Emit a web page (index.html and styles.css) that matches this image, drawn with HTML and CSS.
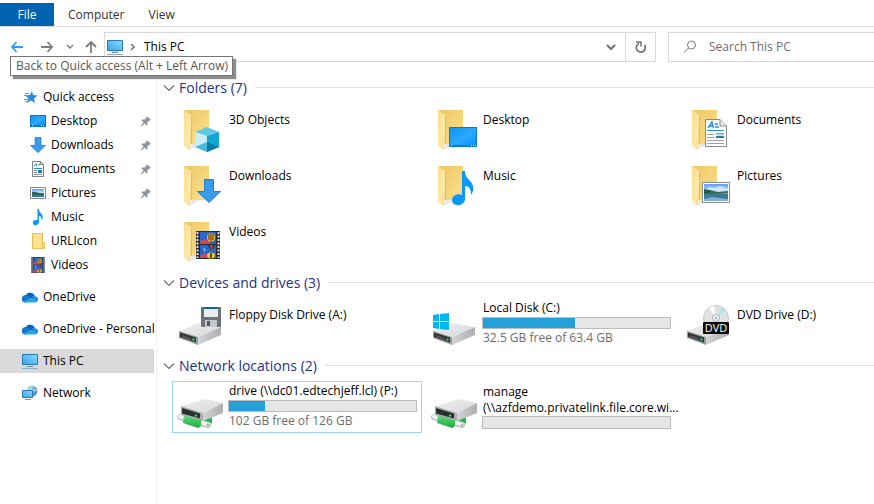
FILE: index.html
```html
<!DOCTYPE html>
<html lang="en">
<head>
<meta charset="utf-8">
<title>This PC</title>
<link rel="stylesheet" href="styles.css">
</head>
<body>
<svg class="defs" aria-hidden="true">
  <defs>
    <linearGradient id="gFlap" x1="0" y1="0" x2="1" y2="1"><stop offset="0" stop-color="#fbdc88"/><stop offset=".6" stop-color="#ffe9a8"/><stop offset="1" stop-color="#f6d47a"/></linearGradient>
    <linearGradient id="gBody" x1="0" y1="0" x2="1" y2="1"><stop offset="0" stop-color="#ecc866"/><stop offset="1" stop-color="#fde08c"/></linearGradient>
    <linearGradient id="gScreen" x1="0" y1="0" x2="1" y2="1"><stop offset="0" stop-color="#0f95f5"/><stop offset=".55" stop-color="#2aa9ff"/><stop offset="1" stop-color="#0a93fa"/></linearGradient>
    <linearGradient id="gMonitor" x1="0" y1="1" x2="1" y2="0"><stop offset="0" stop-color="#38a6ec"/><stop offset="1" stop-color="#8bd6ff"/></linearGradient>
    <linearGradient id="gTop" x1="0" y1="0" x2="1" y2="1"><stop offset="0" stop-color="#f0f0f1"/><stop offset="1" stop-color="#d6d7d9"/></linearGradient>
    <linearGradient id="gSide" x1="0" y1="0" x2="1" y2="0"><stop offset="0" stop-color="#d3d4d5"/><stop offset="1" stop-color="#adaeb1"/></linearGradient>
    <linearGradient id="gSky" x1="0" y1="0" x2="0" y2="1"><stop offset="0" stop-color="#5d9df5"/><stop offset=".5" stop-color="#d6ecfb"/><stop offset=".6" stop-color="#3d7f8c"/><stop offset="1" stop-color="#2b6fb8"/></linearGradient>
    <linearGradient id="gGreen" x1="0" y1="0" x2="0" y2="1"><stop offset="0" stop-color="#5be07a"/><stop offset="1" stop-color="#1fa83f"/></linearGradient>
    <linearGradient id="gGlobe" x1="0" y1="0" x2="1" y2="1"><stop offset="0" stop-color="#bfe3f5"/><stop offset="1" stop-color="#3379a8"/></linearGradient>
  </defs>

  <symbol id="folder" viewBox="0 0 48 48">
    <path d="M13 45l3-6h8z" fill="#e6e6e6"/>
    <path d="M8 5h25v34H15z" fill="url(#gBody)"/>
    <path d="M8 5l8 6v28l-2 1v5l-6-4z" fill="url(#gFlap)"/>
    <path d="M15.500 11v28" stroke="#e3bb58" stroke-width="1"/>
  </symbol>

  <symbol id="drive" viewBox="0 0 48 48">
    <path d="M3 31L23 23l22 4-23 10z" fill="url(#gTop)"/>
    <path d="M22 37l23-10v8L22 45z" fill="url(#gSide)"/>
    <path d="M3 31l19 6v8L3 38z" fill="#9a9c9e"/>
    <path d="M4 32.500l16 5v5L4 37z" fill="#303234"/>
    <path d="M6 35l9 3v2l-9-3z" fill="#54575a"/>
    <circle cx="17.500" cy="39.500" r="1.200" fill="#2fd65a"/>
  </symbol>

  <symbol id="netdrive" viewBox="0 0 48 48">
    <path d="M22 37l14-3v6l-9 4z" fill="#27b548"/>
    <path d="M4 34l28 8" stroke="#bfc3c5" stroke-width="6" stroke-linecap="round"/>
    <path d="M4 33.500l28 8" stroke="#eef0f1" stroke-width="4" stroke-linecap="round"/>
    <path d="M8 32l17 4v7l-3 2-15-5z" fill="url(#gGreen)"/>
    <circle cx="32" cy="42" r="1.500" fill="#b0b4b6"/>
    <path d="M5 23l24-7 18 4-20 10z" fill="url(#gTop)"/>
    <path d="M27 30l20-10v10L27 38z" fill="url(#gSide)"/>
    <path d="M5 23l22 7v8L5 32z" fill="#a9abad"/>
    <path d="M6 25l18 5.500v5L6 30.500z" fill="#2c2e30"/>
    <circle cx="20" cy="32.500" r="1.200" fill="#2fd65a"/>
  </symbol>

  <symbol id="ov-desktop" viewBox="0 0 28 20">
    <path d="M0 0h28v20H0z" fill="#0878d1"/>
    <path d="M1 1h26v17H1z" fill="url(#gScreen)"/>
    <path d="M2 18.500h1M22 18.500h1M24 18.500h1M26 18.500h1" stroke="#fff"/>
  </symbol>

  <symbol id="ov-arrow" viewBox="0 0 24 24">
    <path d="M7.500.500h9v12h7L12 23.500.500 12.500h7z" fill="#3a9bea" stroke="#1f7fd0"/>
  </symbol>

  <symbol id="ov-note" viewBox="0 0 22 34">
    <path d="M10 0h3c0 5 3 8 6 11 3 4 3 9 0 13 0-6-2-9-6-9v13c0 4-4 6-7 6-4 0-6-2-6-5 0-4 5-7 10-5z" fill="#0a97f5"/>
  </symbol>

  <symbol id="ov-doc" viewBox="0 0 22 28">
    <path d="M.500.500H15L21.500 7v20.500H.500z" fill="#fff" stroke="#868a8d"/>
    <path d="M15 .500V7h6.500" fill="#e9e9e9" stroke="#868a8d"/>
    <path d="M3 9L7 3l1.500 6M5 7h3M10 5h3M10 8h4" fill="none" stroke="#2a8fd6" stroke-width="1.400"/>
    <path d="M2 11.500h17" stroke="#2a8fd6"/>
    <path d="M2 15.500h7M2 18.500h7M2 21.500h17M2 24.500h17" stroke="#9ea2a5"/>
    <path d="M11 14h8v5h-8z" fill="url(#gSky)"/>
  </symbol>

  <symbol id="ov-pic" viewBox="0 0 28 21">
    <path d="M.500.500h27v20H.500z" fill="#fff" stroke="#8a8e91"/>
    <path d="M2 2h24v17H2z" fill="url(#gSky)"/>
    <path d="M2 9l6-1 8 2 10-1v2l-10 1H2z" fill="#396f5c"/>
    <path d="M2 7c2-1 4-1 8 3l-8 2z" fill="#245a45"/>
    <path d="M2 8l6-3 5 1 5-2 8 3v1l-10 1-8-1z" fill="#f0f8fd" opacity=".6"/>
    <path d="M2 17l8-2 16 2v2H2z" fill="#d9ecf7" opacity=".5"/>
  </symbol>

  <symbol id="ov-film" viewBox="0 0 24 28">
    <path d="M0 0h24v28H0z" fill="#2b2b2d"/>
    <path d="M1.500 1v26M22.500 1v26" stroke="#e7e7e7" stroke-width="2" stroke-dasharray="2 1.500"/>
    <path d="M4 1h16v12H4zM4 14h16v13H4z" fill="#2866cc"/>
    <path d="M4 10l5-2 5 3v2H4zM4 25l5-3 4 2v3H4z" fill="#c84a58"/>
    <ellipse cx="15" cy="6.500" rx="4" ry="4.500" fill="#f3c522"/>
    <path d="M13 3v6M17 3v6" stroke="#33302a"/>
    <path d="M15 2v9" stroke="#c8352c" stroke-width="1.500"/>
    <path d="M12 14h7l-2 4h-3z" fill="#33302a"/>
    <path d="M14 14h3l-1 4h-1z" fill="#e3452f"/>
    <ellipse cx="15" cy="24.500" rx="4" ry="3" fill="#f3c522"/>
    <path d="M15 22v5" stroke="#222" stroke-width="1.500"/>
    <path d="M7 16l3 3-2 2z" fill="#78b7f2"/>
  </symbol>

  <symbol id="monitor" viewBox="0 0 16 16">
    <path d="M.500 1.500h15v10H.500z" fill="url(#gMonitor)" stroke="#2a79ae"/>
    <path d="M4 12.500h8" stroke="#cfdde6"/>
    <path d="M5 13.500h6" stroke="#75889a"/>
    <path d="M0 15.500h16" stroke="#8daec4"/>
  </symbol>

  <symbol id="cloud" viewBox="0 0 16 16">
    <path d="M4 6a5 5 0 0 1 9 1l-5 4-5-1z" fill="#0a5fb4"/>
    <path d="M0 10.500a3.500 3.500 0 0 1 5-4l5 3-6 4H3a3 3 0 0 1-3-3z" fill="#1279d3"/>
    <path d="M9 9a4 4 0 0 1 5-1.500A3 3 0 0 1 16 11a3 3 0 0 1-2 2z" fill="#1990e0"/>
    <path d="M1.500 13L9 9l6 3.500a2 2 0 0 1-1.500 1H3z" fill="#29a7ea"/>
  </symbol>

  <symbol id="pin" viewBox="0 0 12 12">
    <path d="M7 1l4 4-1.500.500-2 2v2.500l-1 .500-2-2L1.500 11.500.500 11l3-3.500-2-2 .500-1h2.500l2-2z" fill="#8d979f"/>
  </symbol>

  <symbol id="chevron" viewBox="0 0 12 12">
    <path d="M1 3.500l5 5 5-5" fill="none" stroke="#6d6d6d" stroke-width="1.200"/>
  </symbol>
</svg>

<nav class="tabs" aria-label="Ribbon">
  <button class="tab tab-file" type="button">File</button>
  <button class="tab tab-computer" type="button">Computer</button>
  <button class="tab tab-view" type="button">View</button>
</nav>

<div class="toolbar">
  <div class="history">
    <button class="nav-btn back" type="button" aria-label="Back" aria-describedby="tip">
      <svg width="14" height="14" viewBox="0 0 14 14"><path d="M6.500 2L2 7l4.500 5M2 7h11" fill="none" stroke="#3599ff" stroke-width="1.800"/></svg>
    </button>
    <button class="nav-btn forward" type="button" aria-label="Forward">
      <svg width="14" height="14" viewBox="0 0 14 14"><path d="M7.500 2L12 7l-4.500 5M12 7H1" fill="none" stroke="#7b7b7b" stroke-width="1.800"/></svg>
    </button>
    <button class="nav-btn recent" type="button" aria-label="Recent locations">
      <svg width="8" height="8" viewBox="0 0 8 8"><path d="M1 2l3 3 3-3" fill="none" stroke="#808080" stroke-width="1.500"/></svg>
    </button>
    <button class="nav-btn up" type="button" aria-label="Up">
      <svg width="14" height="14" viewBox="0 0 14 14"><path d="M2 7l5-5 5 5M7 2v11" fill="none" stroke="#7b7b7b" stroke-width="1.800"/></svg>
    </button>
    <span class="tooltip" id="tip" role="tooltip">Back to Quick access (Alt + Left Arrow)</span>
  </div>
  <div class="address">
    <svg width="16" height="16"><use href="#monitor"/></svg>
    <svg class="crumb-sep" width="8" height="8" viewBox="0 0 8 8"><path d="M2 1l3 3-3 3" fill="none" stroke="#707070" stroke-width="1.500"/></svg>
    <a class="crumb" href="#">This PC</a>
    <button class="addr-drop" type="button" aria-label="Previous locations">
      <svg width="10" height="8" viewBox="0 0 10 8"><path d="M1 2l4 4 4-4" fill="none" stroke="#707070" stroke-width="2"/></svg>
    </button>
    <button class="refresh" type="button" aria-label="Refresh">
      <svg width="12" height="12" viewBox="0 0 12 12"><path d="M9.500 4A4.500 4.500 0 1 1 4 2.500" fill="none" stroke="#707070" stroke-width="1.700"/><path d="M1 1h5v4.500" fill="none" stroke="#707070" stroke-width="1.500"/></svg>
    </button>
  </div>
  <label class="search">
    <svg width="14" height="14" viewBox="0 0 14 14"><circle cx="8.500" cy="5" r="4" fill="none" stroke="#777"/><path d="M5.500 8L1 12.500" stroke="#777"/></svg>
    <input type="search" placeholder="Search This PC" aria-label="Search This PC">
  </label>
</div>

<div class="window">
  <nav class="sidebar" aria-label="Navigation pane">
    <div class="branch">
      <a class="node" href="#"><svg width="16" height="16" viewBox="0 0 16 16"><path d="M10 2l1 4 4.500.500-3.500 3 1 4.500-4-2.500L5 14l1.500-4.500-3-3L8 6z" fill="#2589dc"/><path d="M3 4.500h4M2 10.500h4M3 12.500h3M2 6.500h3" stroke="#4ba2e8"/></svg><span>Quick access</span></a>
      <a class="node child" href="#"><svg width="16" height="16" viewBox="0 0 16 16"><path d="M0 2h16v12H0z" fill="#0873c6"/><path d="M1 3h14v9H1z" fill="url(#gScreen)"/><path d="M2 12.500h1M11 12.500h1M13 12.500h1" stroke="#fff"/></svg><span>Desktop</span><svg class="pin" width="12" height="12"><use href="#pin"/></svg></a>
      <a class="node child" href="#"><svg width="16" height="16"><use href="#ov-arrow"/></svg><span>Downloads</span><svg class="pin" width="12" height="12"><use href="#pin"/></svg></a>
      <a class="node child" href="#"><svg width="16" height="16" viewBox="0 0 16 16"><path d="M2.500.500h8l3 3v12h-11z" fill="#fff" stroke="#7f8386"/><path d="M10.500.500v3h3" fill="none" stroke="#7f8386"/><path d="M4 5.500l2-3 1 3M8 3.500h2M4 7.500h8" fill="none" stroke="#2a8fd6"/><path d="M4 9.500h3M4 11.500h3M4 13.500h8" stroke="#8e9295"/><path d="M8 9h4v3H8z" fill="#3179ad"/></svg><span>Documents</span><svg class="pin" width="12" height="12"><use href="#pin"/></svg></a>
      <a class="node child" href="#"><svg width="16" height="16" viewBox="0 0 16 16"><path d="M.500 2.500h15v11H.500z" fill="#fff" stroke="#85898c"/><path d="M2 4h12v8H2z" fill="url(#gSky)"/><path d="M2 7c4-1 7 2 12 1v2H2z" fill="#2c6957"/></svg><span>Pictures</span><svg class="pin" width="12" height="12"><use href="#pin"/></svg></a>
      <a class="node child" href="#"><svg width="16" height="16"><use href="#ov-note"/></svg><span>Music</span></a>
      <a class="node child" href="#"><svg width="16" height="16" viewBox="0 0 16 16"><path d="M2.500.500h10v9h2v6h-12z" fill="#ffe18f" stroke="#e5be55"/><path d="M12.500 9.500v6" stroke="#e5be55"/></svg><span>URLIcon</span></a>
      <a class="node child" href="#"><svg width="16" height="16"><use href="#ov-film"/></svg><span>Videos</span></a>
    </div>
    <a class="node" href="#"><svg width="16" height="16"><use href="#cloud"/></svg><span>OneDrive</span></a>
    <a class="node" href="#"><svg width="16" height="16"><use href="#cloud"/></svg><span>OneDrive - Personal</span></a>
    <a class="node current" href="#" aria-current="page"><svg width="16" height="16"><use href="#monitor"/></svg><span>This PC</span></a>
    <a class="node" href="#"><svg width="16" height="16" viewBox="0 0 16 16"><circle cx="10" cy="6" r="5.500" fill="url(#gGlobe)"/><path d="M8 2c3 2 3 6 1 9M5 4c4 2 7 2 10 1" fill="none" stroke="#e4f4fb" stroke-width=".800"/><path d="M.500 5.500h10v7H.500z" fill="url(#gMonitor)" stroke="#2a79ae"/><path d="M3 14.500h6" stroke="#6c93ad"/></svg><span>Network</span></a>
  </nav>

  <main class="content">
    <section>
      <h2 class="group"><svg width="12" height="12"><use href="#chevron"/></svg><span>Folders (7)</span></h2>
      <div class="tiles">
        <div class="tile"><svg class="icon" viewBox="0 0 48 48"><use href="#folder" width="48" height="48"/><path d="M31 22l12 5-12 4-12-4z" fill="#62c9e4"/><path d="M19 27l12 4v16l-12-5z" fill="#c8eef7"/><path d="M43 27l-12 4v16l12-5z" fill="#12a5d3"/><path d="M19 42l12-5v10z" fill="#4ab9d6"/><path d="M43 42l-12-5v10z" fill="#087c9f"/></svg><div class="info plain"><span class="name">3D Objects</span></div></div>
        <div class="tile"><svg class="icon" viewBox="0 0 48 48"><use href="#folder" width="48" height="48"/><use href="#ov-desktop" x="19" y="22" width="28" height="20"/></svg><div class="info plain"><span class="name">Desktop</span></div></div>
        <div class="tile"><svg class="icon" viewBox="0 0 48 48"><use href="#folder" width="48" height="48"/><use href="#ov-doc" x="21" y="14" width="22" height="28"/></svg><div class="info plain"><span class="name">Documents</span></div></div>
        <div class="tile"><svg class="icon" viewBox="0 0 48 48"><use href="#folder" width="48" height="48"/><use href="#ov-arrow" x="21" y="18" width="24" height="24"/></svg><div class="info plain"><span class="name">Downloads</span></div></div>
        <div class="tile"><svg class="icon" viewBox="0 0 48 48"><use href="#folder" width="48" height="48"/><use href="#ov-note" x="22" y="10" width="22" height="34"/></svg><div class="info plain"><span class="name">Music</span></div></div>
        <div class="tile"><svg class="icon" viewBox="0 0 48 48"><use href="#folder" width="48" height="48"/><use href="#ov-pic" x="18" y="21" width="28" height="21"/></svg><div class="info plain"><span class="name">Pictures</span></div></div>
        <div class="tile"><svg class="icon" viewBox="0 0 48 48"><use href="#folder" width="48" height="48"/><use href="#ov-film" x="20" y="14" width="24" height="28"/></svg><div class="info plain"><span class="name">Videos</span></div></div>
      </div>
    </section>

    <section>
      <h2 class="group"><svg width="12" height="12"><use href="#chevron"/></svg><span>Devices and drives (3)</span></h2>
      <div class="tiles">
        <div class="tile"><svg class="icon" viewBox="0 0 48 48"><use href="#drive" width="48" height="48"/><path d="M25 7h20v20H26l-1-1z" fill="#6e7277"/><path d="M28 7h14v10H28z" fill="#e9edf0"/><path d="M28 7h14v2H28z" fill="#1263b5"/><path d="M29 20h12v7H29z" fill="#c4c8cc"/><path d="M31 21h3v5h-3z" fill="#55595d"/></svg><div class="info plain"><span class="name">Floppy Disk Drive (A:)</span></div></div>
        <div class="tile"><svg class="icon" viewBox="0 0 48 48"><use href="#drive" width="48" height="48"/><path d="M3 15l6-1v7H3zM10 14l9-1v8h-9zM3 22h6v7l-6-1zM10 22h9v8l-9-1z" fill="#00b5f0"/></svg><div class="info"><span class="name">Local Disk (C:)</span><div class="bar" role="progressbar" aria-label="Space used" aria-valuenow="49"><div class="fill" style="width:49%"></div></div><span class="free">32.5 GB free of 63.4 GB</span></div></div>
        <div class="tile"><svg class="icon" viewBox="0 0 48 48"><use href="#drive" width="48" height="48"/><circle cx="32" cy="18" r="12.500" fill="#dfe1e3" stroke="#c3c5c7"/><path d="M32 18L25 8a12 12 0 0 1 5-2z" fill="#fff"/><path d="M32 18l6-10 3 2z" fill="#9fe8ee"/><path d="M32 18l-11-3v-3z" fill="#efdce9"/><circle cx="32" cy="18" r="3.500" fill="#f7f7f7" stroke="#b0b2b4"/><circle cx="32" cy="18" r="1.500" fill="#b9bbbd"/><rect x="19" y="22" width="26" height="12" rx="1" fill="#0c0c0c"/><text class="dvd" x="32" y="32" text-anchor="middle">DVD</text></svg><div class="info plain"><span class="name">DVD Drive (D:)</span></div></div>
      </div>
    </section>

    <section>
      <h2 class="group"><svg width="12" height="12"><use href="#chevron"/></svg><span>Network locations (2)</span></h2>
      <div class="tiles">
        <div class="tile selected"><svg class="icon" viewBox="0 0 48 48"><use href="#netdrive" width="48" height="48"/></svg><div class="info"><span class="name">drive (\\dc01.edtechjeff.lcl) (P:)</span><div class="bar" role="progressbar" aria-label="Space used" aria-valuenow="19"><div class="fill" style="width:19%"></div></div><span class="free">102 GB free of 126 GB</span></div></div>
        <div class="tile"><svg class="icon" viewBox="0 0 48 48"><use href="#netdrive" width="48" height="48"/></svg><div class="info two-line"><span class="name">manage</span><span class="name">(\\azfdemo.privatelink.file.core.wi...</span><div class="bar" role="progressbar" aria-label="Space used" aria-valuenow="0"></div></div></div>
      </div>
    </section>
  </main>
</div>
</body>
</html>
```
FILE: styles.css
```css
* { box-sizing: border-box; }

body {
  margin: 0;
  min-height: 100vh;
  display: flex;
  flex-direction: column;
  overflow: hidden;
  background: #fff;
  color: #000;
  font: 12px/16px "Open Sans", "Noto Sans", sans-serif;
}

button, input { font: inherit; color: inherit; border: 0; padding: 0; background: none; }
a { color: inherit; text-decoration: none; }
svg { display: block; flex: none; }
.defs { position: absolute; width: 0; height: 0; }

.tabs { display: flex; padding-top: 3px; border-bottom: 1px solid #dadbdc; }
.tab { height: 23px; padding: 0 12px; color: #333; }
.tab-file { width: 54px; background: #0063b1; color: #fff; }
.tab-computer { padding-left: 14px; }

.toolbar { display: flex; padding-top: 5px; }
.history { position: relative; width: 104px; display: flex; align-items: center; gap: 14px; padding-left: 10px; }
.nav-btn { display: flex; }
.forward { margin-left: 2px; }
.recent { margin-left: -2px; }
.up { margin-left: -4px; }

.tooltip {
  position: absolute;
  z-index: 2;
  left: 10px;
  top: 24px;
  height: 20px;
  padding: 0 4px 0 5px;
  line-height: 18px;
  white-space: nowrap;
  color: #575757;
  background: #fff;
  border: 1px solid #767676;
  box-shadow: 3px 3px 1px #8c8c8c;
}

.address { flex: 1; height: 30px; display: flex; align-items: center; border: 1px solid #d9d9d9; padding-left: 2px; }
.crumb-sep { margin-left: 6px; }
.crumb { flex: 1; margin-left: 7px; }
.addr-drop { width: 28px; height: 28px; display: flex; align-items: center; justify-content: center; }
.refresh { width: 30px; height: 28px; display: flex; align-items: center; justify-content: center; border-left: 1px solid #d9d9d9; }

.search { width: 206px; height: 30px; margin-left: 12px; display: flex; align-items: center; gap: 12px; padding-left: 14px; border: 1px solid #d9d9d9; border-right: 0; }
.search input { flex: 1; min-width: 0; outline: 0; }
.search input::placeholder { color: #6d6d6d; opacity: 1; }

.window { flex: 1; display: flex; padding-top: 10px; }

.sidebar { width: 157px; flex: none; display: flex; flex-direction: column; gap: 8px; padding-top: 13px; border-right: 1px solid #efefef; }
.node { height: 24px; margin-right: 2px; display: flex; align-items: center; gap: 5px; padding: 0 2px 0 22px; white-space: nowrap; }
.child { padding-left: 30px; }
.current { background: #d9d9d9; }
.pin { margin-left: auto; }

.content { flex: 1; min-width: 0; overflow: hidden; }
.group { height: 31px; margin: 0; padding-left: 6px; display: flex; align-items: center; gap: 4px; font-size: 14px; font-weight: 400; line-height: 20px; color: #1e3287; white-space: nowrap; }
.group::after { content: ""; flex: 1; height: 1px; margin-left: 4px; background: #e2e2e2; }

.tiles { display: grid; grid-template-columns: 250px 250px minmax(0, 250px); gap: 4px; padding-left: 15px; }
.tile { height: 52px; display: flex; border: 1px solid transparent; padding: 1px 4px 1px 3px; }
.selected { border-color: #99d1ff; }
.icon { width: 48px; height: 48px; }
.info { flex: 1; min-width: 0; display: flex; flex-direction: column; justify-content: center; gap: 1px; padding: 0 0 2px 4px; }
.plain { justify-content: flex-start; padding-top: 7px; }
.two-line { gap: 0; }
.name, .free { padding-left: 1px; white-space: nowrap; }
.free { color: #6d6d6d; }
.bar { height: 13px; border: 1px solid #bcbcbc; background: #e6e6e6; }
.fill { height: 100%; background: #26a0da; }
.dvd { font-size: 11px; fill: #fff; }
```
